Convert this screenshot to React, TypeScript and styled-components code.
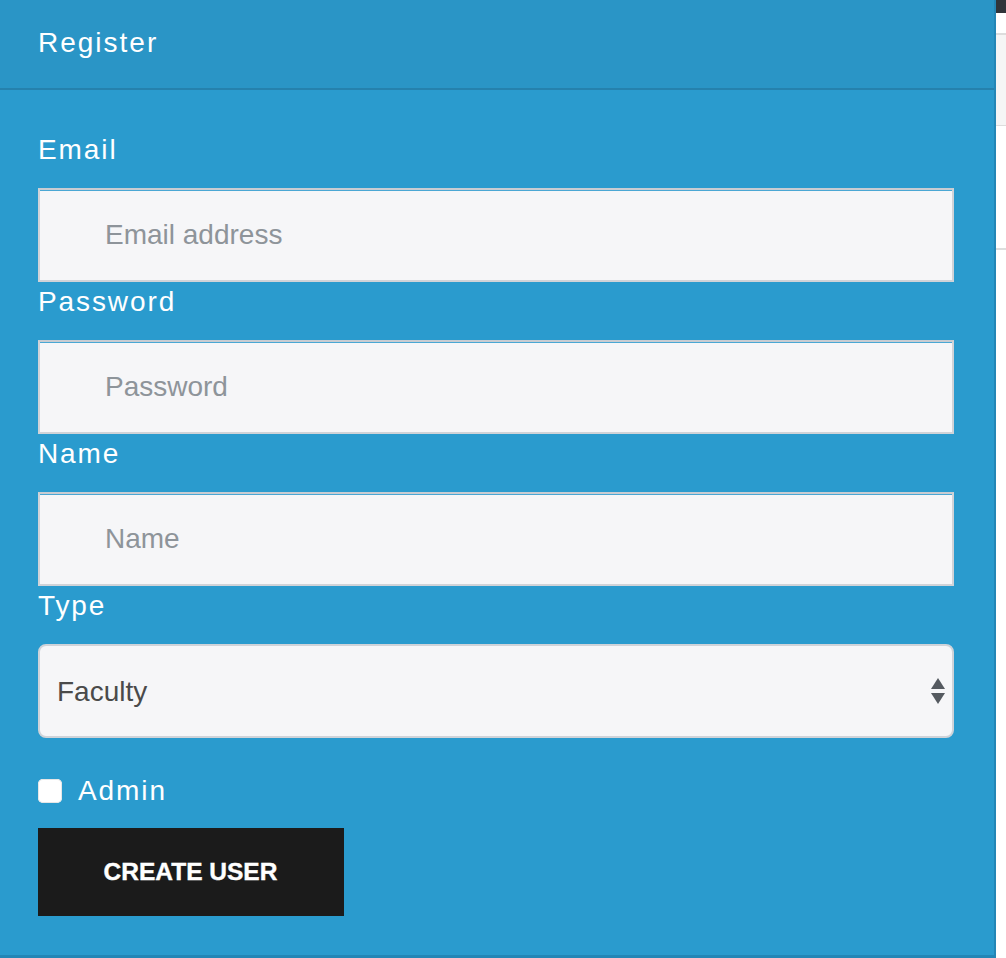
import styled, { createGlobalStyle } from "styled-components";

const GlobalStyle = createGlobalStyle`
  html, body {
    margin: 0;
    padding: 0;
    background: #ffffff;
  }
  body {
    font-family: "Liberation Sans", Arial, Helvetica, sans-serif;
  }
  * {
    box-sizing: border-box;
  }
`;

const Page = styled.div`
  display: flex;
  width: 1006px;
  height: 958px;
  overflow: hidden;
`;

const Panel = styled.div`
  width: 996px;
  flex-shrink: 0;
  display: flex;
  flex-direction: column;
  background: #2a9bce;
  border-right: 2px solid #2386b6;
  border-bottom: 3px solid #2386b6;
`;

const Header = styled.div`
  height: 90px;
  display: flex;
  align-items: center;
  padding: 0 38px 2px;
  background: #2a95c6;
  border-bottom: 2px solid #2581ad;
  color: #ffffff;
  font-size: 28px;
  letter-spacing: 2px;
`;

const Form = styled.form`
  display: flex;
  flex-direction: column;
  padding: 40px 40px 0 38px;
  flex: 1;
`;

const Label = styled.label`
  display: block;
  height: 40px;
  line-height: 40px;
  margin-bottom: 18px;
  color: #ffffff;
  font-size: 28px;
  letter-spacing: 1.9px;
`;

const TextInput = styled.input`
  display: block;
  width: 916px;
  height: 94px;
  margin: 0;
  padding: 0 0 0 65px;
  border: 2px solid #d0d3d8;
  border-top-color: #c8ccd2;
  box-shadow: inset 0 1px 0 #4aa7d4;
  background: #f6f6f8;
  font-family: "Liberation Sans", Arial, sans-serif;
  font-size: 28px;
  color: #444;
  outline: none;

  &::placeholder {
    color: #8e949a;
  }
`;

const SelectWrap = styled.div`
  position: relative;
  width: 916px;
  height: 94px;
`;

const Select = styled.select`
  appearance: none;
  width: 100%;
  height: 100%;
  padding: 0 0 0 17px;
  border: 2px solid #cfd3d9;
  border-radius: 8px;
  background: #f6f6f8;
  font-family: "Liberation Sans", Arial, sans-serif;
  font-size: 28px;
  color: #4a4a4a;
  outline: none;
`;

const Arrows = styled.svg`
  position: absolute;
  right: 9px;
  top: 34px;
  pointer-events: none;
`;

const CheckRow = styled.div`
  display: flex;
  align-items: center;
  gap: 16px;
  margin-top: 41px;
  height: 24px;
  color: #ffffff;
  font-size: 28px;
  letter-spacing: 1.9px;
`;

const CheckBox = styled.span`
  width: 24px;
  height: 24px;
  border-radius: 5px;
  background: #ffffff;
  box-shadow: inset 0 0 0 1px #e6e6e6;
`;

const SubmitButton = styled.button`
  margin-top: 25px;
  width: 306px;
  height: 88px;
  border: none;
  background: #1b1b1b;
  color: #ffffff;
  font-family: "Liberation Sans", Arial, sans-serif;
  font-weight: 700;
  font-size: 24.5px;
  padding: 0 1px 0 0;
  -webkit-text-stroke: 0.4px #ffffff;
  cursor: pointer;
`;

const Side = styled.div`
  flex: 1;
  display: flex;
  flex-direction: column;
  background: #ffffff;
`;

const SideBar = styled.div`
  height: 13px;
  background: #30343a;
`;

const SideGap = styled.div<{ $h: number }>`
  height: ${(p) => p.$h}px;
`;

const SideBlock = styled.div`
  height: 93px;
  background: #f5f5f5;
  border-top: 2px solid #dddddd;
  border-bottom: 1px solid #dddddd;
`;

const SideLine = styled.div`
  height: 2px;
  background: #dddddd;
`;

function Field({ label, placeholder, type }: { label: string; placeholder: string; type: string }) {
  return (
    <>
      <Label>{label}</Label>
      <TextInput type={type} placeholder={placeholder} />
    </>
  );
}

export default function App() {
  return (
    <>
      <GlobalStyle />
      <Page>
        <Panel>
          <Header>Register</Header>
          <Form onSubmit={(e) => e.preventDefault()}>
            <Field label="Email" placeholder="Email address" type="email" />
            <Field label="Password" placeholder="Password" type="password" />
            <Field label="Name" placeholder="Name" type="text" />
            <Label>Type</Label>
            <SelectWrap>
              <Select defaultValue="faculty">
                <option value="faculty">Faculty</option>
                <option value="student">Student</option>
              </Select>
              <Arrows width="14" height="26" viewBox="0 0 14 26">
                <path d="M7 0 L14 11 L0 11 Z" fill="#555a60" />
                <path d="M0 15 L14 15 L7 26 Z" fill="#555a60" />
              </Arrows>
            </SelectWrap>
            <CheckRow>
              <CheckBox />
              Admin
            </CheckRow>
            <SubmitButton type="submit">CREATE USER</SubmitButton>
          </Form>
        </Panel>
        <Side>
          <SideBar />
          <SideGap $h={20} />
          <SideBlock />
          <SideGap $h={122} />
          <SideLine />
        </Side>
      </Page>
    </>
  );
}
